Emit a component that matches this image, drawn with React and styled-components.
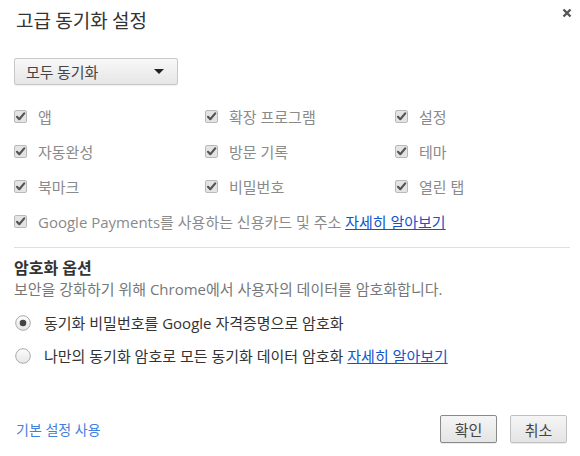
import React, { useState } from "react";
import styled, { createGlobalStyle } from "styled-components";

const GlobalStyle = createGlobalStyle`
  html, body {
    margin: 0;
    padding: 0;
    background: #fff;
  }
  body {
    font-family: "Open Sans", "Noto Sans CJK KR", sans-serif;
    font-size: 15px;
    color: #333;
  }
`;

const items = [
  ["앱", "확장 프로그램", "설정"],
  ["자동완성", "방문 기록", "테마"],
  ["북마크", "비밀번호", "열린 탭"],
];

const CheckIcon = () => (
  <svg width="13" height="13" viewBox="0 0 13 13">
    <rect x="0.5" y="0.5" width="12" height="12" rx="1.5" fill="#e4e4e4" stroke="#b9b9b9" />
    <path d="M3 6.8 L5.3 9.2 L10.2 3.4" fill="none" stroke="#555" strokeWidth="2.2" strokeLinecap="round" strokeLinejoin="round" />
  </svg>
);

const Radio = ({ checked }) => (
  <svg width="16" height="16" viewBox="0 0 16 16">
    <defs>
      <linearGradient id="rg" x1="0" y1="0" x2="0" y2="1">
        <stop offset="0" stopColor="#fdfdfd" />
        <stop offset="1" stopColor="#e6e6e6" />
      </linearGradient>
    </defs>
    <circle cx="8" cy="8" r="7.3" fill="url(#rg)" stroke="#a9a9a9" />
    {checked && <circle cx="8" cy="8" r="3.3" fill="#444" />}
  </svg>
);

const App = () => {
  const [mode, setMode] = useState(0);
  return (
    <>
      <GlobalStyle />
      <Dialog>
        <Header>
          <Title>고급 동기화 설정</Title>
          <Close aria-label="닫기">
            <svg width="10" height="10" viewBox="0 0 10 10">
              <path d="M1.5 1.5 L8.5 8.5 M8.5 1.5 L1.5 8.5" stroke="#555" strokeWidth="2.4" />
            </svg>
          </Close>
        </Header>

        <Select>
          <span>모두 동기화</span>
          <Arrow />
        </Select>

        <CheckGrid>
          {items.flat().map((label) => (
            <CheckItem key={label}>
              <CheckIcon />
              <span>{label}</span>
            </CheckItem>
          ))}
          <CheckItem $wide>
            <CheckIcon />
            <span>
              Google Payments를 사용하는 신용카드 및 주소 <Link href="#">자세히 알아보기</Link>
            </span>
          </CheckItem>
        </CheckGrid>

        <Divider />

        <SectionTitle>암호화 옵션</SectionTitle>
        <Desc>보안을 강화하기 위해 Chrome에서 사용자의 데이터를 암호화합니다.</Desc>

        <RadioRow onClick={() => setMode(0)}>
          <Radio checked={mode === 0} />
          <span>동기화 비밀번호를 Google 자격증명으로 암호화</span>
        </RadioRow>
        <RadioRow onClick={() => setMode(1)}>
          <Radio checked={mode === 1} />
          <span>
            나만의 동기화 암호로 모든 동기화 데이터 암호화 <Link href="#">자세히 알아보기</Link>
          </span>
        </RadioRow>

        <Footer>
          <Reset href="#">기본 설정 사용</Reset>
          <Buttons>
            <Button $default>확인</Button>
            <Button>취소</Button>
          </Buttons>
        </Footer>
      </Dialog>
    </>
  );
};

const Dialog = styled.div`
  width: 580px;
  height: 456px;
  box-sizing: border-box;
  padding: 0 10px 0 14px;
  background: #fff;
`;

const Header = styled.div`
  height: 40px;
  display: flex;
  align-items: center;
  justify-content: space-between;
`;

const Title = styled.h1`
  margin: 0 0 0 2px;
  font-family: "Noto Sans CJK KR", sans-serif;
  font-size: 19px;
  line-height: 24px;
  font-weight: 400;
  color: #333;
`;

const Close = styled.button`
  border: 0;
  background: none;
  padding: 0;
  margin: -14px -4px 0 0;
  width: 14px;
  height: 14px;
  display: flex;
  align-items: center;
  justify-content: center;
`;

const Select = styled.div`
  margin-top: 18px;
  width: 164px;
  height: 27px;
  box-sizing: border-box;
  display: flex;
  align-items: center;
  justify-content: space-between;
  padding: 0 13px 0 11px;
  border: 1px solid #c8c8c8;
  border-radius: 2px;
  background: linear-gradient(#f8f8f8, #e6e6e6);
  box-shadow: 0 1px 0 rgba(0, 0, 0, 0.06);
  font-family: "Noto Sans CJK KR", sans-serif;
  font-size: 15px;
  color: #444;
`;

const Arrow = styled.span`
  width: 0;
  height: 0;
  border-left: 5px solid transparent;
  border-right: 5px solid transparent;
  border-top: 5px solid #222;
`;

const CheckGrid = styled.div`
  margin-top: 14px;
  display: grid;
  grid-template-columns: 191px 190px 1fr;
  grid-auto-rows: 35px;
`;

const CheckItem = styled.label`
  display: flex;
  align-items: center;
  gap: 11px;
  color: #8a8a8a;
  font-size: 15px;
  grid-column: ${({ $wide }) => ($wide ? "1 / -1" : "auto")};
`;

const Link = styled.a`
  color: #1155cc;
  text-decoration: underline;
`;

const Divider = styled.hr`
  margin: 8px 0 0;
  width: 556px;
  border: 0;
  border-top: 1px solid #e0e0e0;
`;

const SectionTitle = styled.h2`
  margin: 10px 0 0;
  font-size: 16px;
  line-height: 20px;
  font-weight: 700;
  color: #333;
`;

const Desc = styled.p`
  margin: 0;
  line-height: 22px;
  color: #777;
`;

const RadioRow = styled.label`
  display: flex;
  align-items: center;
  gap: 13px;
  height: 33px;
  padding-left: 1px;
  color: #333;
  &:first-of-type {
    margin-top: 6px;
  }
`;

const Footer = styled.div`
  margin-top: 43px;
  display: flex;
  align-items: center;
  justify-content: space-between;
  padding-right: 3px;
`;

const Reset = styled.a`
  margin-left: 2px;
  font-size: 14px;
  color: #3f7fe0;
  text-decoration: none;
`;

const Buttons = styled.div`
  display: flex;
  gap: 13px;
`;

const Button = styled.button`
  width: 57px;
  height: 28px;
  border: 1px solid ${({ $default }) => ($default ? "#8a8a8a" : "#c0c0c0")};
  border-radius: 2px;
  background: linear-gradient(#f5f5f5, #e4e4e4);
  box-shadow: 0 1px 0 rgba(0, 0, 0, 0.08);
  font-family: "Noto Sans CJK KR", sans-serif;
  font-size: 15px;
  color: #444;
  padding: 0;
`;

export default App;
